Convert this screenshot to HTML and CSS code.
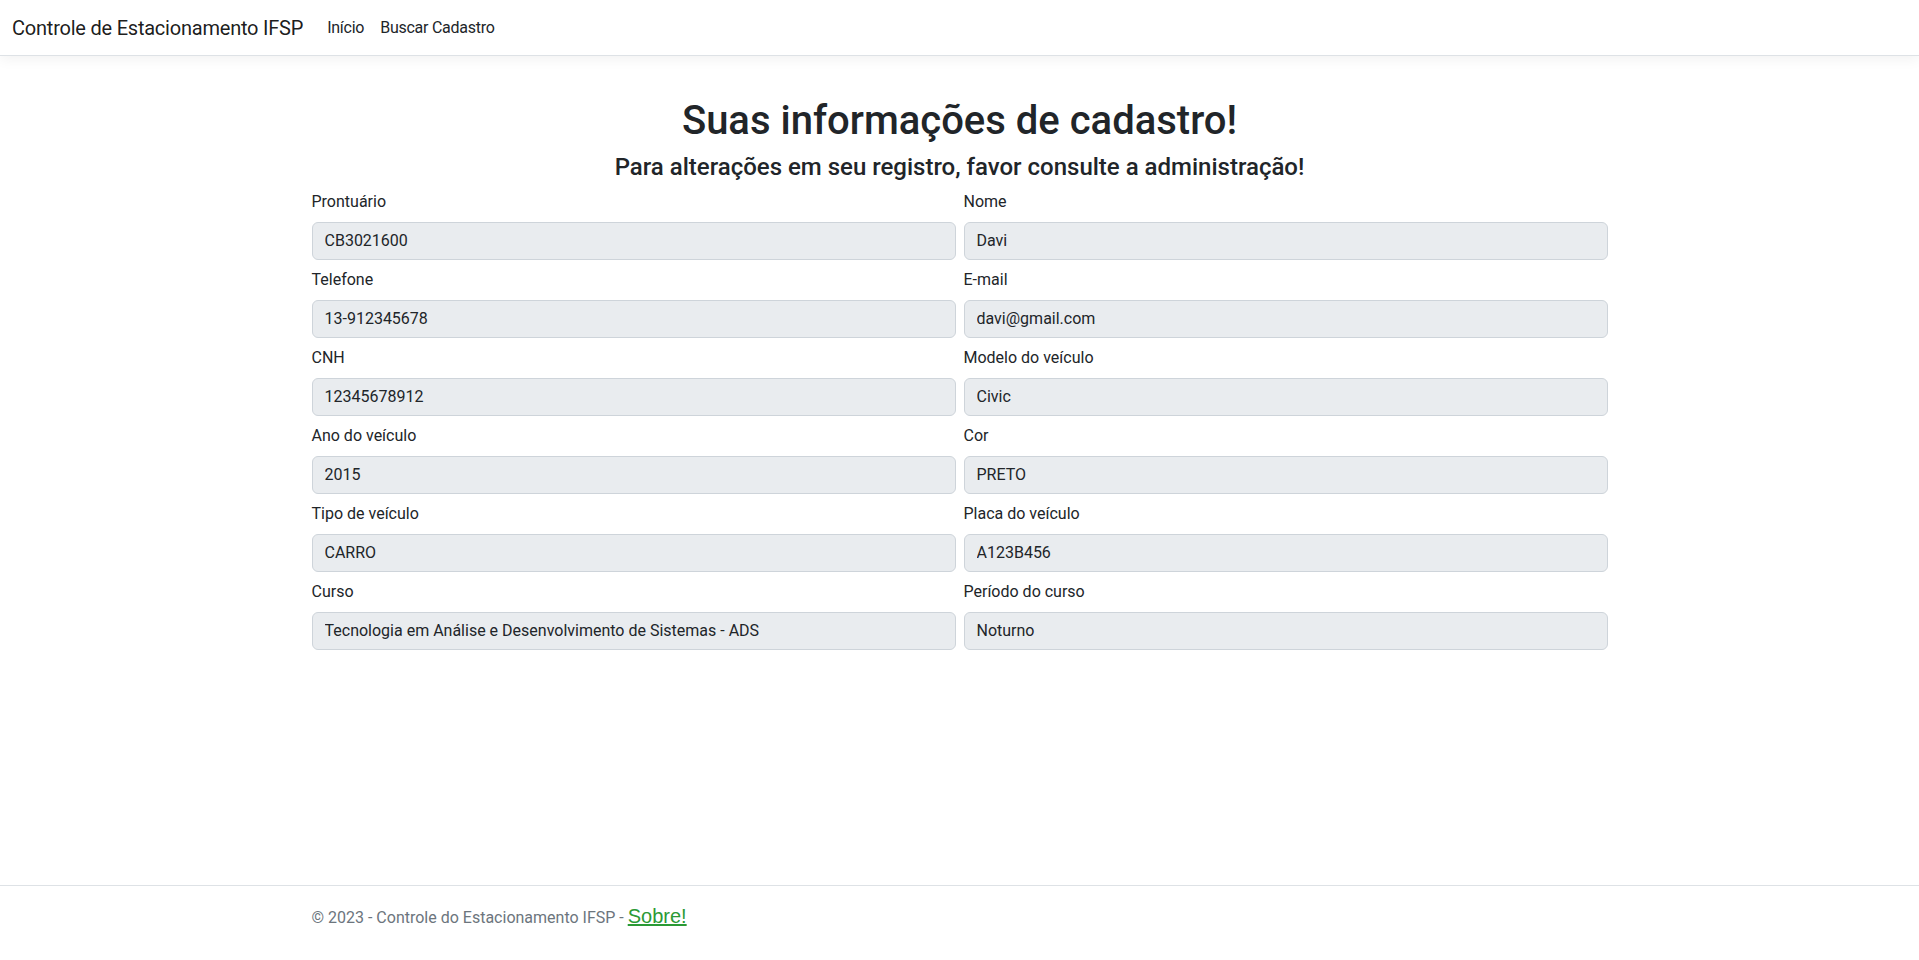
FILE: index.html
```html
<!DOCTYPE html>
<html lang="pt-BR">
<head>
<meta charset="utf-8">
<title>Suas informações de cadastro - Controle de Estacionamento IFSP</title>
<link rel="stylesheet" href="styles.css">
</head>
<body>
<header class="topbar">
  <nav class="navbar">
    <a class="brand" href="#">Controle de Estacionamento IFSP</a>
    <ul class="nav-links">
      <li><a class="nav-link" href="#">Início</a></li>
      <li><a class="nav-link" href="#">Buscar Cadastro</a></li>
    </ul>
  </nav>
</header>

<main class="container">
  <div class="intro">
    <h1 class="title">Suas informações de cadastro!</h1>
    <h2 class="subtitle">Para alterações em seu registro, favor consulte a administração!</h2>
  </div>
  <form class="fields">
    <div class="field"><label class="field-label">Prontuário</label><input class="field-input" value="CB3021600" readonly></div>
    <div class="field"><label class="field-label">Nome</label><input class="field-input" value="Davi" readonly></div>
    <div class="field"><label class="field-label">Telefone</label><input class="field-input" value="13-912345678" readonly></div>
    <div class="field"><label class="field-label">E-mail</label><input class="field-input" value="davi@gmail.com" readonly></div>
    <div class="field"><label class="field-label">CNH</label><input class="field-input" value="12345678912" readonly></div>
    <div class="field"><label class="field-label">Modelo do veículo</label><input class="field-input" value="Civic" readonly></div>
    <div class="field"><label class="field-label">Ano do veículo</label><input class="field-input" value="2015" readonly></div>
    <div class="field"><label class="field-label">Cor</label><input class="field-input" value="PRETO" readonly></div>
    <div class="field"><label class="field-label">Tipo de veículo</label><input class="field-input" value="CARRO" readonly></div>
    <div class="field"><label class="field-label">Placa do veículo</label><input class="field-input" value="A123B456" readonly></div>
    <div class="field"><label class="field-label">Curso</label><input class="field-input" value="Tecnologia em Análise e Desenvolvimento de Sistemas - ADS" readonly></div>
    <div class="field"><label class="field-label">Período do curso</label><input class="field-input" value="Noturno" readonly></div>
  </form>
</main>

<footer class="footer">
  <div class="container footer-inner">© 2023 - Controle do Estacionamento IFSP - <a class="about-link" href="#">Sobre!</a></div>
</footer>
</body>
</html>
```

FILE: styles.css
```css
* {
  box-sizing: border-box;
}

html, body {
  margin: 0;
  padding: 0;
}

body {
  font-family: "Segoe UI", Roboto, "Noto Sans", "Liberation Sans", Arial, sans-serif;
  font-size: 16px;
  line-height: 1.5;
  color: #212529;
  background: #fff;
  height: 960px;
  display: flex;
  flex-direction: column;
  overflow: hidden;
}

.topbar {
  background: #fff;
  border-bottom: 1px solid #dee2e6;
  box-shadow: 0 4px 12px rgba(0, 0, 0, 0.05);
  position: relative;
  z-index: 1;
}

.navbar {
  height: 55px;
  padding: 0 12px;
  display: flex;
  align-items: center;
}

.brand {
  font-size: 20px;
  line-height: 30px;
  letter-spacing: -0.22px;
  color: rgba(0, 0, 0, 0.9);
  text-decoration: none;
  margin-right: 16px;
}

.nav-links {
  list-style: none;
  margin: 0;
  padding: 0;
  display: flex;
}

.nav-link {
  display: block;
  padding: 8px;
  color: #212529;
  text-decoration: none;
  font-size: 16px;
  line-height: 24px;
  letter-spacing: -0.25px;
}

.container {
  width: 1296px;
  margin: 0 auto;
}

main.container {
  padding-top: 41px;
}

.intro {
  text-align: center;
}

.title {
  margin: 0 0 8px;
  font-size: 40px;
  line-height: 48px;
  font-weight: 500;
}

.subtitle {
  margin: 0 0 8px;
  font-size: 24px;
  line-height: 28.8px;
  font-weight: 500;
}

.fields {
  display: grid;
  grid-template-columns: 1fr 1fr;
  column-gap: 8px;
  row-gap: 8px;
}

.field {
  display: flex;
  flex-direction: column;
}

.field-label {
  font-size: 16px;
  line-height: 24px;
  margin-bottom: 8px;
}

.field-input {
  display: block;
  width: 100%;
  height: 38px;
  padding: 6px 12px;
  font-family: inherit;
  font-size: 16px;
  line-height: 24px;
  color: #212529;
  background: #e9ecef;
  border: 1px solid #ced4da;
  border-radius: 6px;
  outline: none;
}

.footer {
  margin-top: auto;
  margin-bottom: 12px;
  border-top: 1px solid #dee2e6;
  color: #6c757d;
  line-height: 60px;
  white-space: nowrap;
}

.about-link {
  font-family: "Liberation Sans", Arial, sans-serif;
  font-size: 20px;
  color: #2a9a35;
  text-decoration: underline;
}
```
